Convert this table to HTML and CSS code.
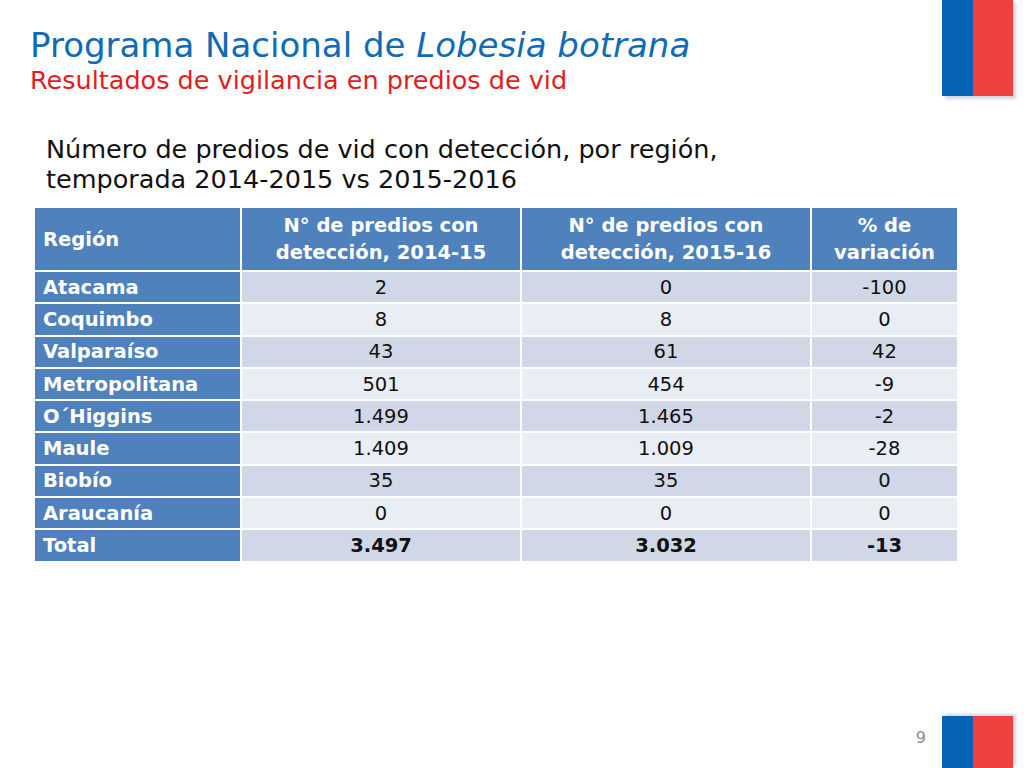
FILE: index.html
```html
<!DOCTYPE html>
<html lang="es">
<head>
<meta charset="utf-8">
<link rel="stylesheet" href="styles.css">
</head>
<body>
<div class="slide">
  <header class="top">
    <div class="titles">
      <h1 class="title">Programa Nacional de <em>Lobesia botrana</em></h1>
      <h2 class="subtitle">Resultados de vigilancia en predios de vid</h2>
    </div>
    <div class="flag flag-top"><span class="blue"></span><span class="red"></span></div>
  </header>
  <p class="lead">Número de predios de vid con detección, por región,<br>temporada 2014-2015 vs 2015-2016</p>
  <table class="data">
    <colgroup><col class="c1"><col class="c2"><col class="c3"><col class="c4"></colgroup>
    <thead>
      <tr><th class="left">Región</th><th>N° de predios con detección, 2014-15</th><th>N° de predios con detección, 2015-16</th><th>% de variación</th></tr>
    </thead>
    <tbody>
      <tr class="odd"><th>Atacama</th><td>2</td><td>0</td><td>-100</td></tr>
      <tr class="even"><th>Coquimbo</th><td>8</td><td>8</td><td>0</td></tr>
      <tr class="odd"><th>Valparaíso</th><td>43</td><td>61</td><td>42</td></tr>
      <tr class="even"><th>Metropolitana</th><td>501</td><td>454</td><td>-9</td></tr>
      <tr class="odd"><th>O´Higgins</th><td>1.499</td><td>1.465</td><td>-2</td></tr>
      <tr class="even"><th>Maule</th><td>1.409</td><td>1.009</td><td>-28</td></tr>
      <tr class="odd"><th>Biobío</th><td>35</td><td>35</td><td>0</td></tr>
      <tr class="even"><th>Araucanía</th><td>0</td><td>0</td><td>0</td></tr>
      <tr class="odd total"><th>Total</th><td>3.497</td><td>3.032</td><td>-13</td></tr>
    </tbody>
  </table>
  <footer class="bottom">
    <span class="page">9</span>
    <div class="flag flag-bottom"><span class="blue"></span><span class="red"></span></div>
  </footer>
</div>
</body>
</html>
```

FILE: styles.css
```css
* { box-sizing: border-box; }
html, body { margin: 0; padding: 0; background: #fff; }
body { font-family: "DejaVu Sans", Verdana, sans-serif; }
.slide {
  width: 1024px;
  height: 768px;
  display: flex;
  flex-direction: column;
  overflow: hidden;
}
.top {
  display: flex;
  justify-content: space-between;
  align-items: flex-start;
  height: 96px;
}
.titles { padding: 25px 0 0 30px; }
.title {
  margin: 0;
  font-weight: normal;
  font-size: 34px;
  line-height: 40px;
  color: #0f6bb3;
  white-space: nowrap;
}
.title em { font-style: italic; }
.subtitle {
  margin: 0;
  font-weight: normal;
  font-size: 25.5px;
  line-height: 30px;
  color: #e31c1c;
  white-space: nowrap;
}
.flag {
  display: flex;
  margin-right: 11px;
  box-shadow: 3px 3px 3px rgba(120, 140, 170, 0.35);
}
.flag .blue { width: 31px; background: #0563b5; }
.flag .red { width: 40px; background: #ef4141; }
.flag-top { height: 96px; }
.lead {
  margin: 38px 0 0 46px;
  font-size: 25.5px;
  line-height: 30px;
  color: #111;
  white-space: nowrap;
}
.data {
  margin: 12px 0 0 33px;
  width: 924px;
  border-collapse: collapse;
  table-layout: fixed;
  font-size: 19.5px;
}
.c1 { width: 207px; }
.c2 { width: 280px; }
.c3 { width: 290px; }
.c4 { width: 147px; }
.data th, .data td {
  border: 2px solid #fff;
  padding: 0 8px;
  white-space: nowrap;
}
.data thead th {
  background: #4f81bd;
  color: #fff;
  font-weight: bold;
  height: 64px;
  line-height: 27px;
  text-align: center;
  white-space: normal;
}
.data thead th.left { text-align: left; }
.data tbody th {
  background: #4f81bd;
  color: #fff;
  font-weight: bold;
  text-align: left;
  height: 32.3px;
}
.data tbody td {
  text-align: center;
  color: #111;
  height: 32.3px;
}
.data tr.odd td { background: #d0d8e8; }
.data tr.even td { background: #e9edf4; }
.data tr.total td { font-weight: bold; }
.bottom {
  margin-top: auto;
  display: flex;
  justify-content: flex-end;
  align-items: flex-start;
}
.page {
  font-size: 16px;
  color: #8a8a8a;
  margin: 12px 16px 0 0;
}
.flag-bottom { height: 52px; box-shadow: 3px -2px 3px rgba(120, 140, 170, 0.35); }
```
